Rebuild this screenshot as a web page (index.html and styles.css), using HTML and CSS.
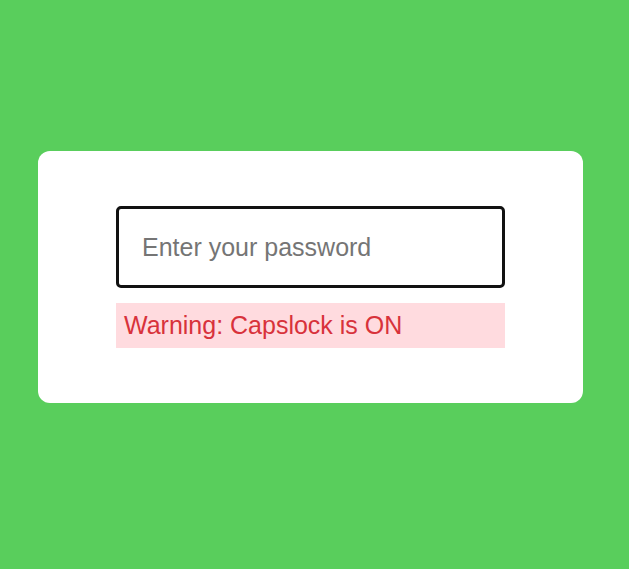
FILE: index.html
```html
<!DOCTYPE html>
<html>
<head>
<meta charset="utf-8">
<link rel="stylesheet" href="styles.css">
</head>
<body>
<div class="card">
  <input class="pw" type="password" placeholder="Enter your password" autofocus>
  <div class="warn">Warning: Capslock is ON</div>
</div>
</body>
</html>
```
FILE: styles.css
```css
html, body { margin: 0; padding: 0; }
body {
  background: #59ce5c;
  min-height: 569px;
  box-sizing: border-box;
  padding: 151px 0 0 38px;
  font-family: "Liberation Sans", Arial, sans-serif;
}
.card {
  width: 545px;
  height: 252px;
  box-sizing: border-box;
  background: #fff;
  border-radius: 12px;
  padding: 55px 78px;
  display: flex;
  flex-direction: column;
  gap: 15px;
}
.pw {
  display: block;
  width: 389px;
  height: 82px;
  box-sizing: border-box;
  border: 3px solid #111;
  border-radius: 5px;
  padding: 0 23px;
  font-family: "Liberation Sans", Arial, sans-serif;
  font-size: 25px;
  color: #222;
  caret-color: #444;
  outline: none;
  background: #fff;
}
.pw::placeholder { color: #757575; }
.warn {
  width: 389px;
  height: 45px;
  box-sizing: border-box;
  background: #ffdbdf;
  color: #d8323b;
  font-size: 25px;
  line-height: 45px;
  padding-left: 8px;
}
```
